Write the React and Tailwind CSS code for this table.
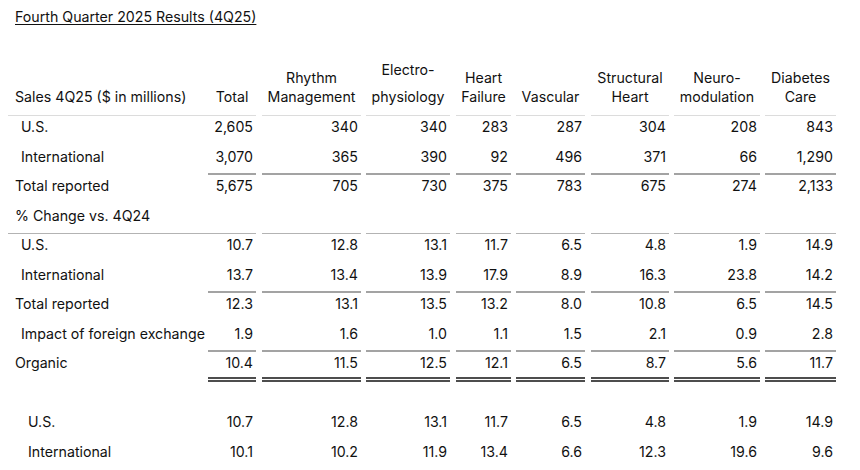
import React from 'react';

// column widths + gaps, measured off the lines under each column
const cols = [
  'w-[200px]',
  'w-[48px]',
  'ml-[6px] w-[99px]',
  'ml-[5px] w-[84px]',
  'ml-[6px] w-[55px]',
  'ml-[5px] w-[69px]',
  'ml-[6px] w-[78px]',
  'ml-[5px] w-[86px]',
  'ml-[5px] w-[71px]',
];

const headers = [
  ['Total'],
  ['Rhythm', 'Management'],
  ['Electro-', 'physiology'],
  ['Heart', 'Failure'],
  ['Vascular'],
  ['Structural', 'Heart'],
  ['Neuro-', 'modulation'],
  ['Diabetes', 'Care'],
];

const indents = {
  0: 'pl-[7px]',
  1: 'pl-[13px]',
  2: 'pl-[20px]',
};

const lines = {
  none: '',
  sub: 'border-b-2 border-[#a3a3a3]',
  dbl: 'border-b-[5px] border-double border-[#4d4d4d]',
};

const rows = [
  { label: 'U.S.', indent: 1, vals: ['2,605', '340', '340', '283', '287', '304', '208', '843'] },
  { label: 'International', indent: 1, line: 'sub', vals: ['3,070', '365', '390', '92', '496', '371', '66', '1,290'] },
  { label: 'Total reported', indent: 0, vals: ['5,675', '705', '730', '375', '783', '675', '274', '2,133'] },
  { label: '% Change vs. 4Q24', indent: 0, section: true },
  { label: 'U.S.', indent: 1, vals: ['10.7', '12.8', '13.1', '11.7', '6.5', '4.8', '1.9', '14.9'] },
  { label: 'International', indent: 1, line: 'sub', vals: ['13.7', '13.4', '13.9', '17.9', '8.9', '16.3', '23.8', '14.2'] },
  { label: 'Total reported', indent: 0, vals: ['12.3', '13.1', '13.5', '13.2', '8.0', '10.8', '6.5', '14.5'] },
  { label: 'Impact of foreign exchange', indent: 1, line: 'sub', vals: ['1.9', '1.6', '1.0', '1.1', '1.5', '2.1', '0.9', '2.8'] },
  { label: 'Organic', indent: 0, line: 'dbl', vals: ['10.4', '11.5', '12.5', '12.1', '6.5', '8.7', '5.6', '11.7'] },
  { label: '', indent: 0, vals: ['', '', '', '', '', '', '', ''] },
  { label: 'U.S.', indent: 2, vals: ['10.7', '12.8', '13.1', '11.7', '6.5', '4.8', '1.9', '14.9'] },
  { label: 'International', indent: 2, vals: ['10.1', '10.2', '11.9', '13.4', '6.6', '12.3', '19.6', '9.6'] },
];

function Row({ row }) {
  // section row: one line running under label + every column
  if (row.section) {
    return (
      <div className="flex h-[29.5px]">
        {cols.map((c, i) => (
          <div key={i} className={`${c} border-b-[1.5px] border-[#b3b3b3] pt-px leading-5`}>
            {i === 0 && <span className={indents[row.indent]}>{row.label}</span>}
          </div>
        ))}
      </div>
    );
  }
  const border = lines[row.line || 'none'];
  return (
    <div className="flex h-[29.5px]">
      <div className={`${cols[0]} ${indents[row.indent]} whitespace-nowrap pt-px leading-5`}>
        {row.label}
      </div>
      {row.vals.map((v, i) => (
        <div key={i} className={`${cols[i + 1]} ${border} pr-[3px] pt-px text-right leading-5`}>
          {v}
        </div>
      ))}
    </div>
  );
}

export default function App() {
  return (
    <div className="h-[470px] w-[860px] overflow-hidden bg-white pl-2 text-[14.2px] text-[#111] [font-family:Inter,'Liberation_Sans',sans-serif]">
      <div className="pl-[7px] pt-[7px] leading-5">
        <span className="underline underline-offset-2">Fourth Quarter 2025 Results (4Q25)</span>
      </div>

      {/* column headings, bottom aligned */}
      <div className="flex h-[89px] items-end">
        <div className={`${cols[0]} whitespace-nowrap border-b-[1.5px] border-[#dcdcdc] pb-[9.5px] pl-[7px] leading-[19px]`}>
          Sales 4Q25 ($ in millions)
        </div>
        {headers.map((h, i) => (
          <div
            key={i}
            className={`${cols[i + 1]} flex flex-col items-center whitespace-nowrap border-b-[1.5px] border-[#dcdcdc] pb-[9.5px] leading-[19px]`}
          >
            {h.map((t, j) => (
              <span key={j} className={h[0] === 'Electro-' && j === 0 ? 'mb-2' : ''}>
                {t}
              </span>
            ))}
          </div>
        ))}
      </div>

      {rows.map((r, i) => (
        <Row key={i} row={r} />
      ))}
    </div>
  );
}
